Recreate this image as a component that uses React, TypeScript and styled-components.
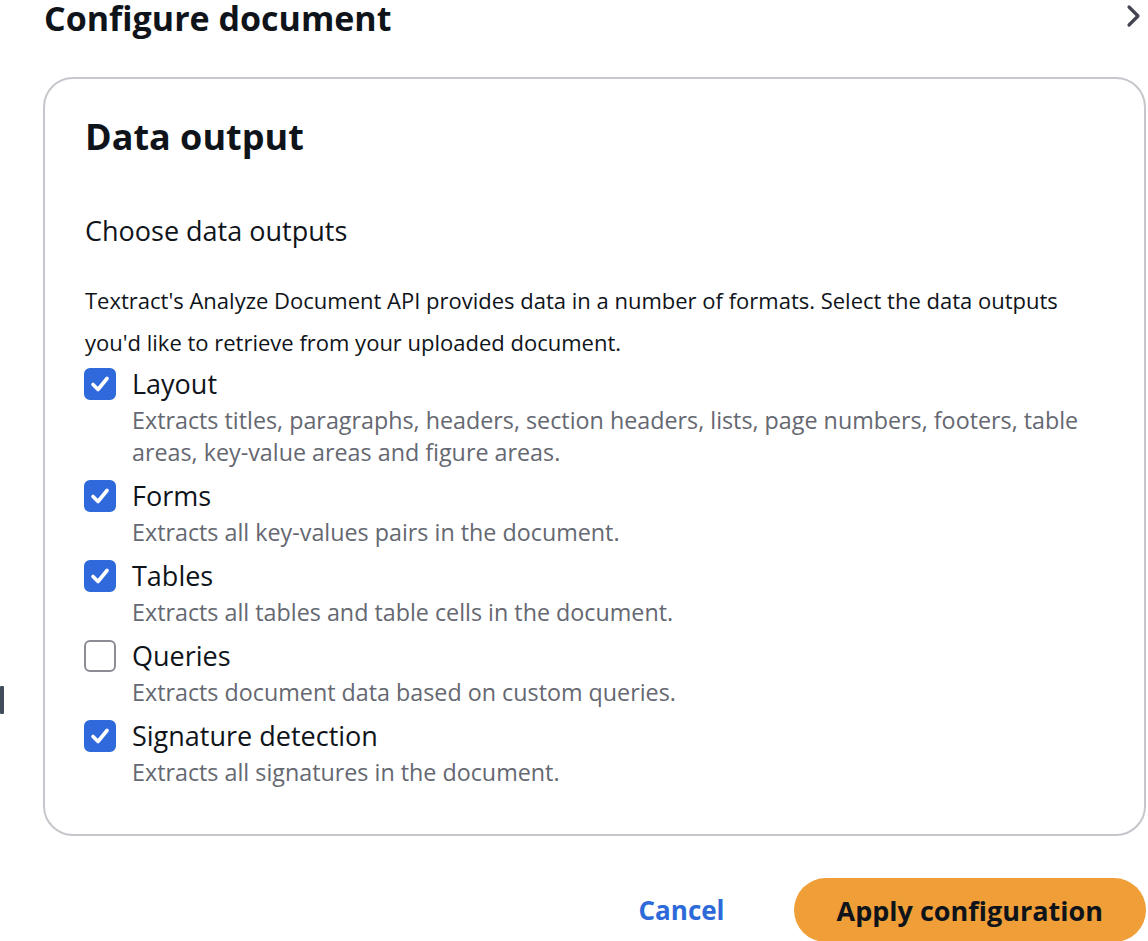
import styled, { createGlobalStyle } from "styled-components";

const GlobalStyle = createGlobalStyle`
  html, body {
    margin: 0;
    padding: 0;
    background: #ffffff;
    font-family: "Open Sans", "Noto Sans", sans-serif;
    color: #0f141a;
    overflow: hidden;
  }
`;

type Option = {
  label: string;
  description: string;
  checked: boolean;
};

const options: Option[] = [
  {
    label: "Layout",
    description:
      "Extracts titles, paragraphs, headers, section headers, lists, page numbers, footers, table areas, key-value areas and figure areas.",
    checked: true,
  },
  {
    label: "Forms",
    description: "Extracts all key-values pairs in the document.",
    checked: true,
  },
  {
    label: "Tables",
    description: "Extracts all tables and table cells in the document.",
    checked: true,
  },
  {
    label: "Queries",
    description: "Extracts document data based on custom queries.",
    checked: false,
  },
  {
    label: "Signature detection",
    description: "Extracts all signatures in the document.",
    checked: true,
  },
];

function App() {
  return (
    <>
      <GlobalStyle />
      <Page>
        <Handle />
        <Header>
          <Title>Configure document</Title>
          <Chevron viewBox="0 0 16 24" aria-hidden>
            <path d="M3 3 L12 12 L3 21" />
          </Chevron>
        </Header>

        <Panel>
          <PanelTitle>Data output</PanelTitle>
          <FieldLabel>Choose data outputs</FieldLabel>
          <Intro>
            Textract's Analyze Document API provides data in a number of formats. Select the data
            outputs you'd like to retrieve from your uploaded document.
          </Intro>

          <List>
            {options.map((o) => (
              <Item key={o.label}>
                <Box $checked={o.checked}>
                  {o.checked && (
                    <svg viewBox="0 0 32 32" width="32" height="32" aria-hidden>
                      <path d="M9 16.5 L14 21.5 L23 10.5" />
                    </svg>
                  )}
                </Box>
                <ItemText>
                  <ItemLabel>{o.label}</ItemLabel>
                  <ItemDesc>{o.description}</ItemDesc>
                </ItemText>
              </Item>
            ))}
          </List>
        </Panel>

        <Footer>
          <CancelButton>Cancel</CancelButton>
          <PrimaryButton>Apply configuration</PrimaryButton>
        </Footer>
      </Page>
    </>
  );
}
export default App;

const Page = styled.div`
  position: relative;
  width: 1148px;
  height: 941px;
  box-sizing: border-box;
  padding: 0 2px 0 43px;
  overflow: hidden;
`;

const Handle = styled.div`
  position: absolute;
  left: 0;
  top: 686px;
  width: 4px;
  height: 28px;
  background: #414d5c;
  border-radius: 1px;
`;

const Header = styled.div`
  display: flex;
  align-items: flex-start;
  justify-content: space-between;
  height: 77px;
`;

const Title = styled.h1`
  margin: 0 0 0 1px;
  font-size: 34px;
  line-height: 36px;
  font-weight: 700;
  color: #0f141a;
`;

const Chevron = styled.svg`
  width: 16px;
  height: 24px;
  margin: 4px 4px 0 0;
  fill: none;
  stroke: #424650;
  stroke-width: 3.2;
  stroke-linecap: round;
  stroke-linejoin: round;
`;

const Panel = styled.section`
  box-sizing: border-box;
  height: 759px;
  border: 2px solid #c6c6cd;
  border-radius: 30px;
  padding: 32px 40px 0 40px;
`;

const PanelTitle = styled.h2`
  margin: 0;
  font-size: 36px;
  line-height: 52px;
  font-weight: 700;
  color: #0f141a;
`;

const FieldLabel = styled.div`
  margin-top: 48px;
  font-size: 27px;
  line-height: 40px;
  color: #0f141a;
`;

const Intro = styled.p`
  margin: 28px 0 0;
  font-size: 22px;
  line-height: 42px;
  color: #0f141a;
`;

const List = styled.div`
  display: flex;
  flex-direction: column;
  gap: 8px;
  margin-top: 1px;
`;

const Item = styled.div`
  display: flex;
  align-items: flex-start;
  gap: 16px;
`;

const Box = styled.div<{ $checked: boolean }>`
  flex: none;
  box-sizing: border-box;
  width: 32px;
  height: 32px;
  margin: 4px 0 0 -1px;
  border-radius: 6px;
  background: ${(p) => (p.$checked ? "#2f69dc" : "#ffffff")};
  border: 2px solid ${(p) => (p.$checked ? "#2f69dc" : "#8c8c94")};
  display: flex;
  align-items: center;
  justify-content: center;

  svg {
    flex: none;
    fill: none;
    stroke: #ffffff;
    stroke-width: 3.6;
    stroke-linecap: round;
    stroke-linejoin: round;
  }
`;

const ItemText = styled.div`
  display: flex;
  flex-direction: column;
`;

const ItemLabel = styled.div`
  font-size: 27px;
  line-height: 40px;
  color: #0f141a;
`;

const ItemDesc = styled.div`
  font-size: 23.3px;
  line-height: 32px;
  color: #656871;
`;

const Footer = styled.div`
  display: flex;
  justify-content: flex-end;
  align-items: center;
  gap: 69px;
  margin-top: 42px;
`;

const CancelButton = styled.button`
  border: none;
  background: none;
  padding: 0;
  font-family: inherit;
  font-size: 26px;
  font-weight: 700;
  color: #2d6ad9;
  cursor: pointer;
`;

const PrimaryButton = styled.button`
  box-sizing: border-box;
  height: 64px;
  padding: 0 43px;
  border: none;
  border-radius: 32px;
  background: #f09e38;
  font-family: inherit;
  font-size: 27px;
  font-weight: 700;
  color: #0f141a;
  cursor: pointer;
`;
